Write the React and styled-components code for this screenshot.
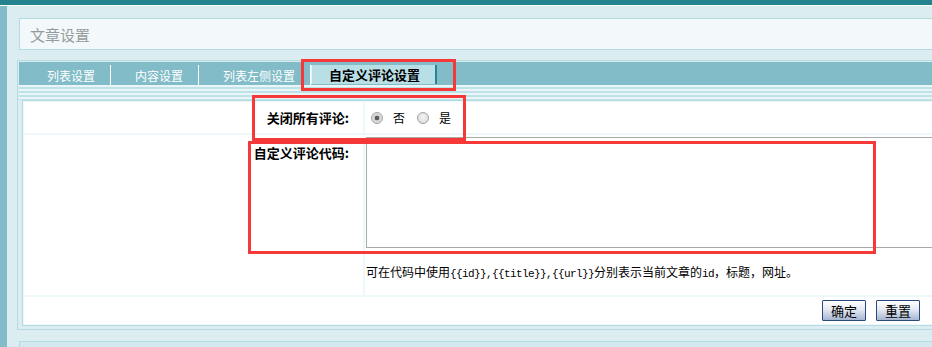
import React from "react";
import styled, { createGlobalStyle } from "styled-components";

const GlobalStyle = createGlobalStyle`
  html, body {
    margin: 0;
    padding: 0;
    overflow: hidden;
    background: #dbedf0;
  }
  body {
    font-family: "Noto Sans CJK SC", "Noto Sans", sans-serif;
    font-size: 12px;
    color: #000;
  }
`;

const Page = styled.div`
  position: relative;
  width: 960px;
  min-height: 347px;
  background: #dbedf0;
`;

const TopBar = styled.div`
  height: 5px;
  background: #25838f;
  border-bottom: 1px solid #ffffff;
`;

const Body = styled.div`
  display: flex;
  min-height: 341px;
`;

const LeftStrip = styled.div`
  width: 7px;
  flex-shrink: 0;
  background: #82bcc8;
`;

const Main = styled.div`
  flex: 1;
  padding: 12px 0 0 10px;
`;

const TitleBox = styled.div`
  margin-left: 2px;
  height: 30px;
  border: 1px solid #b5dbe2;
  background: #f3f9fb;
  padding-left: 10px;
  display: flex;
  align-items: center;
  font-size: 15px;
  color: #959c9e;
`;

const Panel = styled.div`
  margin-top: 10px;
  border: 1px solid #b5dbe2;
  padding: 1px;
`;

const TabBar = styled.div`
  height: 23px;
  background: #82bcc8;
  padding-left: 4px;
  display: flex;
  align-items: flex-end;
`;

const Tab = styled.div`
  height: ${p => (p.$active ? "19px" : "20px")};
  margin-bottom: ${p => (p.$active ? "1px" : "0")};
  display: flex;
  align-items: center;
  padding: ${p => (p.$active ? "0 15px 0 17px" : "0 15px 0 24px")};
  color: ${p => (p.$active ? "#000" : "#fff")};
  font-weight: ${p => (p.$active ? "bold" : "normal")};
  font-size: ${p => (p.$active ? "13px" : "12px")};
  background: ${p => (p.$active ? "#b8dfe6" : "transparent")};
  border-left: ${p => (p.$active ? "1px solid #e3f2f5" : "none")};
  border-right: ${p => (p.$active ? "2px solid #2a8392" : "1px solid #ffffff")};
  white-space: nowrap;
`;

const Stripes = styled.div`
  height: 15px;
  background: repeating-linear-gradient(
    to bottom,
    #eaf5f8 0,
    #eaf5f8 2px,
    #bfe2e9 2px,
    #bfe2e9 4px
  );
`;

const FormBox = styled.div`
  margin: 0 2px 2px 3px;
  border: 1px solid #b5dbe2;
  padding: 1px;
  background: #eef7f9;
`;

const FormGrid = styled.div`
  display: grid;
  grid-template-columns: 339px 1fr;
  grid-template-rows: 31px 160px 27px;
  gap: 2px;
`;

const LabelCell = styled.div`
  background: #fff;
  display: flex;
  justify-content: flex-end;
  align-items: ${p => (p.$top ? "flex-start" : "center")};
  padding: ${p => (p.$top ? "10px 14px 0 0" : "0 14px 0 0")};
  font-weight: bold;
  font-size: 13px;
  line-height: 16px;
`;

const FieldCell = styled.div`
  background: #fff;
  display: flex;
  flex-direction: ${p => (p.$column ? "column" : "row")};
  align-items: ${p => (p.$column ? "stretch" : "center")};
  padding-left: ${p => (p.$column ? "0" : "6px")};
`;

const RadioLabel = styled.label`
  display: flex;
  align-items: center;
  margin-right: 12px;
`;

const Radio = styled.input.attrs({ type: "radio" })`
  appearance: none;
  width: 12px;
  height: 12px;
  margin: 0 10px 0 0;
  border-radius: 50%;
  border: 1px solid #a3a3a3;
  background: radial-gradient(circle at 50% 40%, #f4f4f4 0, #d6d6d6 100%);
  box-sizing: border-box;
  &:checked {
    background: radial-gradient(circle, #5b5b5b 0, #5b5b5b 2px, #cfcfcf 2.6px, #efefef 100%);
  }
`;

const CodeArea = styled.textarea`
  display: block;
  margin: 2px 0 0 1px;
  width: calc(100% - 6px);
  height: 111px;
  box-sizing: border-box;
  border: 1px solid #a9a9a9;
  resize: none;
  outline: none;
`;

const Hint = styled.div`
  margin-top: 16px;
  padding-left: 1px;
  line-height: 16px;
  white-space: nowrap;
`;

const Code = styled.span`
  font-family: "Liberation Mono", monospace;
  font-size: 11px;
  letter-spacing: -0.6px;
`;

const ButtonRow = styled.div`
  grid-column: 1 / -1;
  background: #fff;
  display: flex;
  justify-content: flex-end;
  align-items: flex-start;
  gap: 10px;
  padding: 3px 34px 0 0;
`;

const Button = styled.button`
  width: 44px;
  height: 21px;
  padding: 0;
  border: 1px solid #2b4a7e;
  border-radius: 1px;
  background: linear-gradient(to bottom, #ffffff 0%, #e4e9f2 45%, #a7b5d2 100%);
  font-family: "Noto Sans CJK SC", sans-serif;
  font-size: 13px;
  line-height: 19px;
  color: #000;
`;

const NextPanel = styled.div`
  margin: 11px 0 0 2px;
  height: 10px;
  border-top: 1px solid #b5dbe2;
  border-left: 1px solid #b5dbe2;
  background: #d2eaef;
`;

const Mark = styled.div`
  position: absolute;
  box-sizing: border-box;
  border: 3px solid #f53838;
  pointer-events: none;
`;

const marks = [
  { left: 301, top: 59, width: 155, height: 32 },
  { left: 252, top: 95, width: 214, height: 46 },
  { left: 248, top: 141, width: 628, height: 113 },
];

export default function App() {
  return (
    <Page>
      <GlobalStyle />
      <TopBar />
      <Body>
        <LeftStrip />
        <Main>
          <TitleBox>文章设置</TitleBox>
          <Panel>
            <TabBar>
              <Tab>列表设置</Tab>
              <Tab>内容设置</Tab>
              <Tab>列表左侧设置</Tab>
              <Tab $active>自定义评论设置</Tab>
            </TabBar>
            <Stripes />
            <FormBox>
              <FormGrid>
                <LabelCell>关闭所有评论:</LabelCell>
                <FieldCell>
                  <RadioLabel>
                    <Radio name="close" defaultChecked />否
                  </RadioLabel>
                  <RadioLabel>
                    <Radio name="close" />是
                  </RadioLabel>
                </FieldCell>
                <LabelCell $top>自定义评论代码:</LabelCell>
                <FieldCell $column>
                  <CodeArea />
                  <Hint>
                    可在代码中使用<Code>{"{{id}},{{title}},{{url}}"}</Code>分别表示当前文章的<Code>id</Code>，标题，网址。
                  </Hint>
                </FieldCell>
                <ButtonRow>
                  <Button type="button">确定</Button>
                  <Button type="button">重置</Button>
                </ButtonRow>
              </FormGrid>
            </FormBox>
          </Panel>
          <NextPanel />
        </Main>
      </Body>
      {marks.map((m, i) => (
        <Mark key={i} style={m} />
      ))}
    </Page>
  );
}
